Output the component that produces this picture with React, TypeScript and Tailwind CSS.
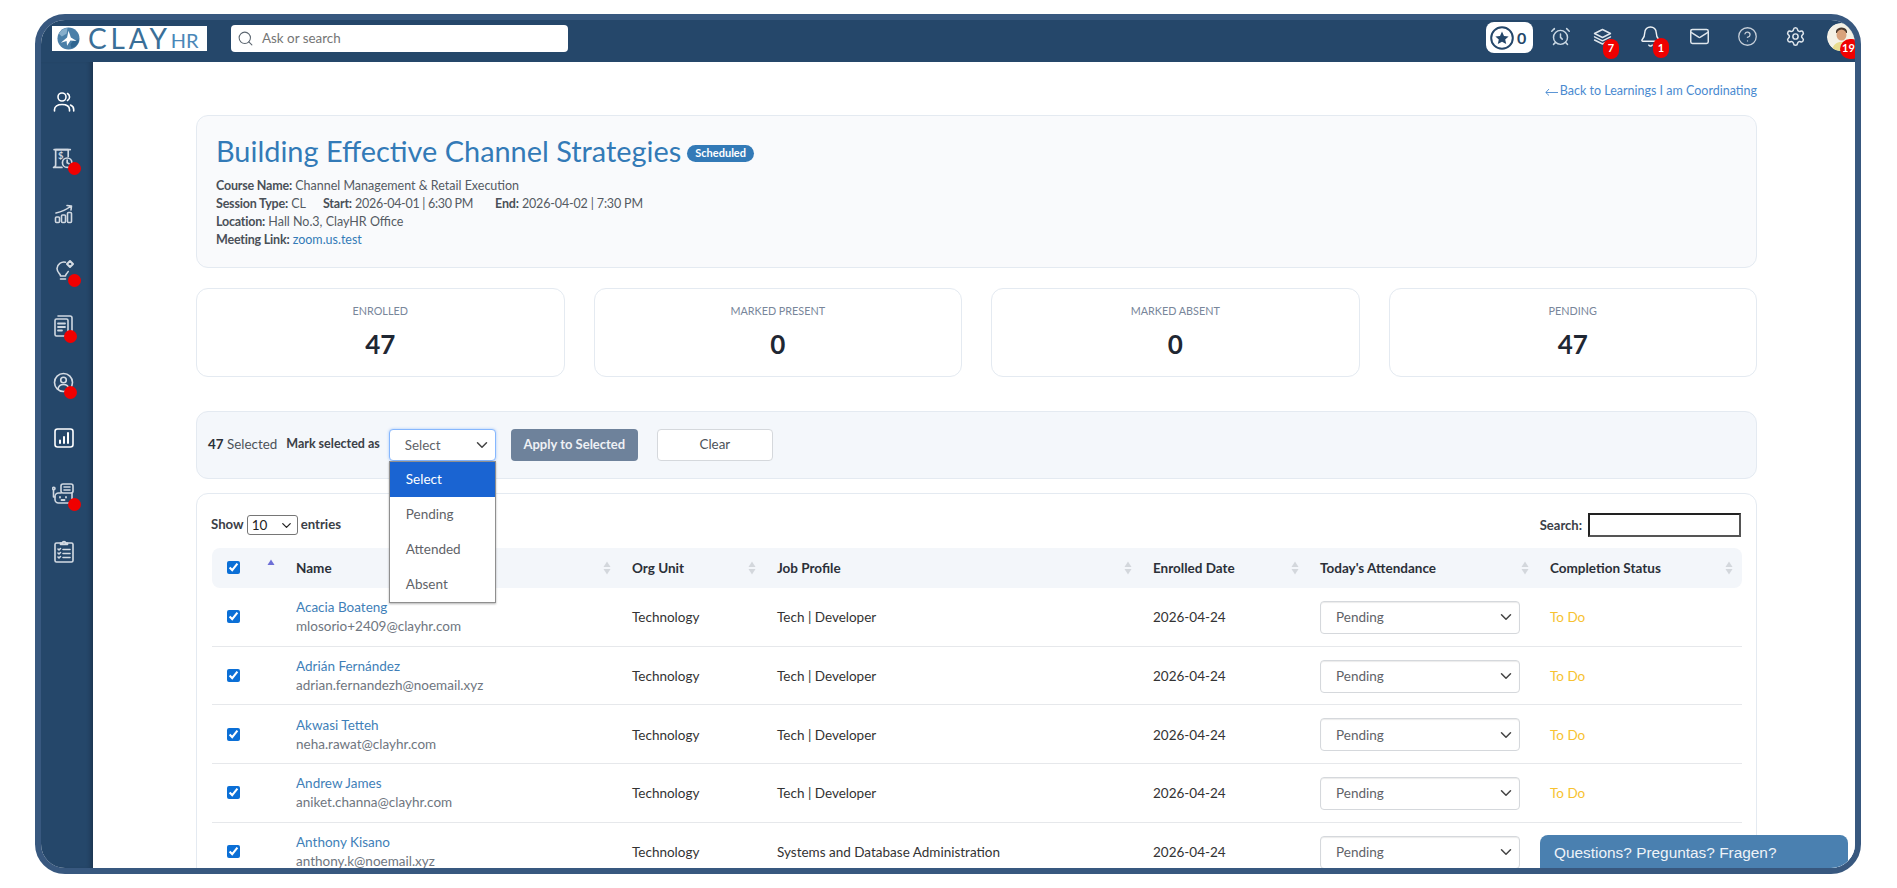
import React from "react";
import { ChevronDown, CircleHelp, Mail, Settings, Bell, Search, AlarmClock } from "lucide-react";

function Logo() {
  return (
    <div className="flex h-[25px] w-[155px] items-center bg-white pl-[5px] leading-none">
      <svg width="23" height="23" viewBox="0 0 24 24" className="shrink-0">
        <circle cx="12" cy="12" r="11.500" fill="#4a7fa8" />
        <path d="M2 7a11 11 0 0 1 9-6l-1 6-5 3z" fill="#86aecb" />
        <path d="M15 22a11 11 0 0 0 8-9l-6 1-3 4z" fill="#2f6590" />
        <path d="M4 16.500 10.500 11 12 4l2.500 7 6 3.500-6.500-.5-3.500 5.500-.5-5z" fill="#ffffff" />
      </svg>
      <span className="ml-[8px] text-[28px] font-normal leading-[25px] tracking-[3.800px] text-[#3a6f98]">CLAY</span>
      <span className="mt-[3px] text-[20px] font-normal leading-[22px] text-[#4a87b8]">HR</span>
    </div>
  );
}

function RedBadge({ n, className }: { n: string; className: string }) {
  return (
    <span className={`absolute flex h-[20px] w-[16px] items-center justify-center rounded-full bg-[#f00000] text-[11px] font-bold text-white ${className}`}>
      {n}
    </span>
  );
}

function TopBar() {
  return (
    <header className="flex h-[42px] shrink-0 items-center bg-[#25476a] pb-[5px] pl-[11px]">
      <Logo />
      <div className="ml-[24px] flex h-[27px] w-[337px] items-center rounded-[4px] bg-white pl-[6px] text-[13.400px] text-[#757575]">
        <Search size={17} strokeWidth={1.500} className="text-[#5c6670]" />
        <span className="ml-[8px]">Ask or search</span>
      </div>
      <div className="mb-[2px] ml-[918px] flex h-[31px] w-[47px] items-center rounded-[8px] bg-white pl-[4px]">
        <svg width="24" height="24" viewBox="0 0 24 24">
          <circle cx="12" cy="12" r="10.800" fill="none" stroke="#25476a" strokeWidth="2" />
          <path d="m12 5.600 2 4.300 4.600.5-3.400 3.100 1 4.600-4.200-2.400-4.200 2.400 1-4.600-3.400-3.100 4.600-.5z" fill="#25476a" />
        </svg>
        <span className="ml-[3px] text-[16px] font-bold text-[#25476a]">0</span>
      </div>
      <div className="mb-[4px] ml-[15px] flex w-[24px] justify-center text-[#c9d7e3]">
        <AlarmClock size={21} strokeWidth={1.700} />
      </div>
      <div className="relative mb-[4px] ml-[18px] flex w-[24px] justify-center text-[#dfe6ec]">
        <svg width="21" height="20" viewBox="0 0 20 20" fill="none" stroke="currentColor" strokeWidth="1.400" strokeLinejoin="round" strokeLinecap="round">
          <path d="M10 2.500 18 6.500l-8 4-8-4z" />
          <path d="M2 9.800l8 4 8-4" />
          <path d="M2 13l8 4 8-4" />
        </svg>
        <RedBadge n="7" className="left-[13px] top-[12px]" />
      </div>
      <div className="relative mb-[4px] ml-[24px] flex w-[24px] justify-center text-[#eef2f5]">
        <Bell size={23} strokeWidth={1.500} />
        <RedBadge n="1" className="left-[15px] top-[13px]" />
      </div>
      <div className="mb-[4px] ml-[25px] flex w-[24px] justify-center text-[#dfe6ec]">
        <Mail size={21} strokeWidth={1.700} />
      </div>
      <div className="mb-[4px] ml-[24px] flex w-[24px] justify-center text-[#c5ced8]">
        <CircleHelp size={21} strokeWidth={1.500} />
      </div>
      <div className="mb-[4px] ml-[24px] flex w-[24px] justify-center text-[#dfe6ec]">
        <Settings size={21} strokeWidth={1.700} />
      </div>
      <div className="relative mb-[4px] ml-[20px] h-[28px] w-[28px]">
        <svg width="28" height="28" viewBox="0 0 28 28" className="rounded-full">
          <circle cx="14" cy="14" r="14" fill="#f4f1e6" />
          <path d="M9 8c1-4 9-5 11 0v2H9z" fill="#4b3a2e" />
          <ellipse cx="14.500" cy="12" rx="5" ry="5.500" fill="#d9a27c" />
          <path d="M5 28c1-7 5-9 9-9s8 2 9 9z" fill="#e8dc8f" />
        </svg>
        <span className="absolute left-[13px] top-[16px] flex h-[20px] w-[22px] items-center rounded-full bg-[#f00000] pl-[2px] text-[11px] font-bold text-white">19</span>
      </div>
    </header>
  );
}

const stroke = { fill: "none", stroke: "currentColor", strokeWidth: 1.600, strokeLinecap: "round", strokeLinejoin: "round" } as const;

const IconUsers = () => (
  <svg width="22" height="22" viewBox="0 0 22 22" {...stroke}>
    <circle cx="9" cy="6" r="4" />
    <path d="M1.500 20v-1.500c0-3.200 3-5 7.500-5s7.500 1.800 7.500 5V20" />
    <path d="M14.500 2.500a4 4 0 0 1 0 7" />
    <path d="M17.500 14c2 .8 3.200 2.400 3.200 4.500V20" />
  </svg>
);
const IconBill = () => (
  <svg width="23" height="23" viewBox="0 0 22 22" {...stroke}>
    <path d="M3.500 2.500h12v6.500M3.500 2.500v14.500c0 1.300-.8 2.500-2 2.500h8" />
    <path d="M2 2.500h15.500" />
    <circle cx="14.500" cy="15" r="4.500" />
    <path d="M14.500 12.500V15l1.800 1" />
    <text x="5.800" y="11" fontSize="9" fill="currentColor" stroke="none" fontFamily="Lato" fontWeight="700">$</text>
  </svg>
);
const IconGrowth = () => (
  <svg width="20" height="20" viewBox="0 0 20 20" {...stroke}>
    <path d="M2 9c5-1 10-3 15-7M13 1.500l4.500.5-.5 4" />
    <rect x="1.500" y="13" width="4" height="5.500" rx="1" />
    <rect x="7.500" y="11" width="4" height="7.500" rx="1" />
    <rect x="13.500" y="8.500" width="4" height="10" rx="1" />
  </svg>
);
const IconBulb = () => (
  <svg width="22" height="23" viewBox="0 0 22 23" {...stroke}>
    <path d="M12.500 3.200A7 7 0 0 0 4 9.500c0 2.500 1.200 3.800 2.500 5.300.7.800 1 1.500 1 2.200h5c0-.8.400-1.500 1-2.200.7-.8 1.300-1.500 1.700-2.300" />
    <path d="M7.500 20h5" />
    <path d="m17 2 3 3-3 3-3-3z" strokeWidth="2" />
  </svg>
);
const IconDocs = () => (
  <svg width="20" height="22" viewBox="0 0 20 22" {...stroke}>
    <rect x="1" y="4" width="13" height="17" rx="1.500" />
    <path d="M4 1h12a2 2 0 0 1 2 2v14" />
    <path d="M4 8.500h7M4 12h7M4 15.500h4" strokeWidth="1.800" />
  </svg>
);
const IconPerson = () => (
  <svg width="21" height="21" viewBox="0 0 21 21" {...stroke}>
    <circle cx="10.500" cy="10.500" r="9" />
    <circle cx="10.500" cy="8" r="2.800" />
    <path d="M5 17c.5-3 2.500-4.500 5.500-4.500S15.500 14 16 17" />
  </svg>
);
const IconReport = () => (
  <svg width="20" height="20" viewBox="0 0 20 20" {...stroke}>
    <rect x="1" y="1" width="18" height="18" rx="2.500" />
    <path d="M6 15v-2.500M10 15V9M14 15V5" strokeWidth="2" />
  </svg>
);
const IconBot = () => (
  <svg width="23" height="23" viewBox="0 0 23 23" {...stroke}>
    <rect x="9" y="1" width="12" height="9" rx="2" />
    <path d="M12 4h6M12 7h6" />
    <path d="M9 10H6.500A3.500 3.500 0 0 0 3 13.500v3A3.500 3.500 0 0 0 6.500 20h10a3.500 3.500 0 0 0 3.500-3.500V10" />
    <path d="M3 14H1.500V7" />
    <circle cx="1.800" cy="5.500" r="1.200" />
    <path d="M8 14v.6M14 14v.6M9.500 17h3" strokeWidth="1.800" />
  </svg>
);
const IconClipboard = () => (
  <svg width="20" height="23" viewBox="0 0 20 23" {...stroke}>
    <rect x="1" y="3" width="18" height="19" rx="1.500" />
    <path d="M6.500 4.500V3h2a1.500 1.500 0 0 1 3 0h2v1.500z" />
    <path d="M4 9l1 1 1.500-1.500M4 13l1 1 1.500-1.500M4 17l1 1 1.500-1.500M9 9.500h7M9 13.500h7M9 17.500h7" />
  </svg>
);

function Side({ children, dot, tone = "text-[#e4e9ef]" }: { children: React.ReactNode; dot?: string; tone?: string }) {
  return (
    <div className={`relative flex h-[56px] w-full items-center justify-center pr-[7px] ${tone}`}>
      {children}
      {dot && <span className={`absolute h-[13px] w-[13px] rounded-full bg-[#f00000] ${dot}`} />}
    </div>
  );
}

function Sidebar() {
  return (
    <aside className="flex w-[52px] shrink-0 flex-col bg-[#25476a] pt-[12px] shadow-[inset_-5px_0_5px_-3px_rgba(0,0,0,0.28)]">
      <Side tone="text-white"><IconUsers /></Side>
      <Side dot="left-[27px] top-[32px]" tone="text-[#d0d8e1]"><IconBill /></Side>
      <Side tone="text-[#d0d8e1]"><IconGrowth /></Side>
      <Side dot="left-[27px] top-[32px]" tone="text-[#d4dbe3]"><IconBulb /></Side>
      <Side dot="left-[23px] top-[32px]" tone="text-[#d0d8e1]"><IconDocs /></Side>
      <Side dot="left-[23px] top-[32px]" tone="text-[#d4dbe3]"><IconPerson /></Side>
      <Side tone="text-white"><IconReport /></Side>
      <Side dot="left-[27px] top-[32px]" tone="text-[#d0d8e1]"><IconBot /></Side>
      <div className="mt-[1px]"><Side tone="text-[#d4dbe3]"><IconClipboard /></Side></div>
    </aside>
  );
}

function SortIcon({ active }: { active?: boolean }) {
  return (
    <svg width="8" height="14" viewBox="0 0 8 14" className="shrink-0">
      <path d="M4 0.500 7.500 6h-7z" fill={active ? "#6d6fd6" : "#d3d7dc"} />
      {!active && <path d="M4 13.500 7.500 8h-7z" fill="#d3d7dc" />}
    </svg>
  );
}

function Stat({ label, value }: { label: string; value: string }) {
  return (
    <div className="flex h-[89px] flex-col items-center rounded-[12px] border border-[#e4eaf1] bg-white pt-[14px]">
      <div className="text-[10.800px] leading-[16px] text-[#78869a]">{label}</div>
      <div className="mt-[5px] text-[26px] font-bold leading-[40px] text-[#1f2733]">{value}</div>
    </div>
  );
}

const rows = [
  ["Acacia Boateng", "mlosorio+2409@clayhr.com", "Tech | Developer"],
  ["Adrián Fernández", "adrian.fernandezh@noemail.xyz", "Tech | Developer"],
  ["Akwasi Tetteh", "neha.rawat@clayhr.com", "Tech | Developer"],
  ["Andrew James", "aniket.channa@clayhr.com", "Tech | Developer"],
  ["Anthony Kisano", "anthony.k@noemail.xyz", "Systems and Database Administration"],
];

const Check = () => (
  <input type="checkbox" defaultChecked className="block h-[13px] w-[13px] accent-[#0b6fd6]" />
);

function Th({ children, className = "" }: { children: React.ReactNode; className?: string }) {
  return (
    <th className={`bg-[#f3f6fa] pl-[12px] pr-[9px] text-left text-[13.500px] font-bold text-[#2b3038] ${className}`}>
      <div className="flex items-center justify-between">
        <span>{children}</span>
        <SortIcon />
      </div>
    </th>
  );
}

function Table() {
  return (
    <table className="w-[1530px] table-fixed border-separate border-spacing-0">
      <colgroup>
        <col className="w-[72px]" />
        <col className="w-[336px]" />
        <col className="w-[145px]" />
        <col className="w-[376px]" />
        <col className="w-[167px]" />
        <col className="w-[230px]" />
        <col className="w-[204px]" />
      </colgroup>
      <thead>
        <tr className="h-[40px]">
          <th className="rounded-l-[8px] bg-[#f3f6fa] pl-[15px] pr-[9px]">
            <div className="flex items-center justify-between">
              <span className="mb-[1px]"><Check /></span>
              <span className="mb-[4px]"><SortIcon active /></span>
            </div>
          </th>
          <Th>Name</Th>
          <Th>Org Unit</Th>
          <Th>Job Profile</Th>
          <Th>Enrolled Date</Th>
          <Th>Today's Attendance</Th>
          <Th className="rounded-r-[8px]">Completion Status</Th>
        </tr>
      </thead>
      <tbody>
        {rows.map((r) => (
          <tr key={r[0]} className="h-[58.700px] text-[13.500px] text-[#333333]">
            <td className="border-b border-[#e6e8eb] pl-[15px]"><Check /></td>
            <td className="border-b border-[#e6e8eb] pl-[12px] pt-[1px] leading-[19px]">
              <div className="text-[#3f7fb8]">{r[0]}</div>
              <div className="text-[#6f7680]">{r[1]}</div>
            </td>
            <td className="border-b border-[#e6e8eb] pl-[12px] pt-[1px]">Technology</td>
            <td className="border-b border-[#e6e8eb] pl-[12px] pt-[1px]">{r[2]}</td>
            <td className="border-b border-[#e6e8eb] pl-[12px] pt-[1px]">2026-04-24</td>
            <td className="border-b border-[#e6e8eb] pl-[12px] pt-[1px]">
              <div className="flex h-[33px] w-[200px] items-center justify-between rounded-[4px] border border-[#d5d8dc] pl-[15px] pr-[4px] text-[#5f6368] shadow-[inset_0_1px_1px_rgba(0,0,0,0.08)]">
                <span>Pending</span>
                <ChevronDown size={18} strokeWidth={2} className="text-[#444]" />
              </div>
            </td>
            <td className="border-b border-[#e6e8eb] pl-[12px] pt-[1px] text-[#f7c231]">To Do</td>
          </tr>
        ))}
      </tbody>
    </table>
  );
}

const L = ({ children }: { children: React.ReactNode }) => (
  <b className="tracking-[-0.200px] text-[#4a5058]">{children}</b>
);

function Main() {
  return (
    <main className="relative min-w-0 flex-1 overflow-hidden bg-white pl-[103px] pr-[98px] text-[13.400px] text-[#333]">
      <div className="flex h-[53px] items-center justify-end pt-[6px] text-[12.500px] text-[#4a8ad0]">
        <svg width="13" height="8" viewBox="0 0 13 8" className="mr-[2px]" fill="none" stroke="#4a8ad0" strokeWidth="0.900">
          <path d="M13 4.500H1M4 1 .8 4.500 4 7.500" />
        </svg>
        Back to Learnings I am Coordinating
      </div>

      <section className="h-[153px] rounded-[12px] border border-[#e4eaf1] bg-[#f9fafc] pl-[19px] pt-[16px]">
        <div className="flex items-center">
          <h1 className="text-[28.900px] font-normal leading-[38px] text-[#337ab7]">Building Effective Channel Strategies</h1>
          <span className="ml-[6px] mt-[5px] flex h-[17px] items-center rounded-full bg-[#337ab7] px-[8px] text-[11px] font-bold text-white">Scheduled</span>
        </div>
        <div className="mt-[7px] text-[12.500px] leading-[18px] text-[#555b63]">
          <div><L>Course Name:</L> Channel Management &amp; Retail Execution</div>
          <div className="flex">
            <span><L>Session Type:</L> CL</span>
            <span className="ml-[17px]"><L>Start:</L> <span className="tracking-[-0.300px]">2026-04-01 | 6:30 PM</span></span>
            <span className="ml-[22px]"><L>End:</L> <span className="tracking-[-0.150px]">2026-04-02 | 7:30 PM</span></span>
          </div>
          <div><L>Location:</L> Hall No.3, ClayHR Office</div>
          <div><L>Meeting Link:</L> <span className="text-[#337ab7]">zoom.us.test</span></div>
        </div>
      </section>

      <section className="mt-[20px] grid grid-cols-4 gap-[29px]">
        <Stat label="ENROLLED" value="47" />
        <Stat label="MARKED PRESENT" value="0" />
        <Stat label="MARKED ABSENT" value="0" />
        <Stat label="PENDING" value="47" />
      </section>

      <section className="mt-[34px] flex h-[68px] items-center rounded-[12px] border border-[#e4eaf1] bg-[#f4f7fb] pb-[1px] pl-[11px]">
        <span className="text-[#4c5259]"><b className="text-[#2b3038]">47</b> Selected</span>
        <b className="ml-[9px] text-[12.500px] text-[#3b4047]">Mark selected as</b>
        <div className="relative ml-[9px]">
          <div className="flex h-[32px] w-[107px] items-center justify-between rounded-[4px] border border-[#86b7fe] bg-white pl-[15px] pr-[4px] pt-[1px] text-[#5f6368] shadow-[0_0_3px_rgba(13,110,253,0.35)]">
            <span>Select</span>
            <ChevronDown size={18} strokeWidth={2} className="text-[#444]" />
          </div>
          <ul className="absolute left-0 top-[32px] z-10 w-[107px] border border-[#8f8f8f] bg-white text-[13.500px] text-[#5f6368] shadow-[0_1px_2px_rgba(0,0,0,0.3)]">
            <li className="flex h-[35px] items-center bg-[#1a64d2] pl-[16px] text-white">Select</li>
            <li className="flex h-[35px] items-center pl-[16px]">Pending</li>
            <li className="flex h-[35px] items-center pl-[16px]">Attended</li>
            <li className="flex h-[35px] items-center pl-[16px]">Absent</li>
          </ul>
        </div>
        <button className="ml-[15px] h-[32px] w-[127px] rounded-[4px] bg-[#6e829b] text-[13px] font-bold text-[#eef1f5]">Apply to Selected</button>
        <button className="ml-[19px] h-[32px] w-[116px] rounded-[4px] border border-[#d5d8dc] bg-white text-[#4c5259]">Clear</button>
      </section>

      <section className="mt-[14px] rounded-t-[12px] border border-[#e4eaf1] bg-white pl-[14px] pr-[15px] pt-[19px]">
        <div className="flex h-[24px] items-center justify-between">
          <div className="flex items-center text-[13.200px] font-bold text-[#3b4047]">
            Show
            <div className="mx-[3px] flex h-[20px] w-[51px] items-center justify-between rounded-[3px] border border-[#767676] pl-[4px] pr-[3px] text-[13.500px] font-normal text-[#222]">
              <span>10</span>
              <ChevronDown size={15} strokeWidth={2} />
            </div>
            entries
          </div>
          <div className="flex items-center text-[13px] font-bold text-[#3b4047]">
            <span className="mt-[2px]">Search:</span>
            <input aria-label="Search" className="ml-[6px] h-[24px] w-[153px] border-2 border-[#555] border-t-[#222] border-l-[#222] bg-white" />
          </div>
        </div>
        <div className="ml-[1px] mt-[11px]">
          <Table />
        </div>
      </section>
    </main>
  );
}

export default function App() {
  return (
    <div className="h-[888px] w-[1897px] overflow-hidden bg-white pl-[35px] pt-[14px] font-[Lato,sans-serif]">
      <div className="relative flex h-[860px] w-[1826px] flex-col overflow-hidden rounded-[30px] border-[6px] border-[#38587f]">
        <TopBar />
        <div className="flex min-h-0 flex-1">
          <Sidebar />
          <Main />
        </div>
        <div className="absolute bottom-0 right-[7px] flex h-[33px] w-[308px] items-center rounded-t-[8px] bg-[#4a80b0] pl-[14px] pt-[2px] font-['Liberation_Sans',sans-serif] text-[15.400px] text-[#eef3f8]">
          Questions? Preguntas? Fragen?
        </div>
      </div>
    </div>
  );
}
